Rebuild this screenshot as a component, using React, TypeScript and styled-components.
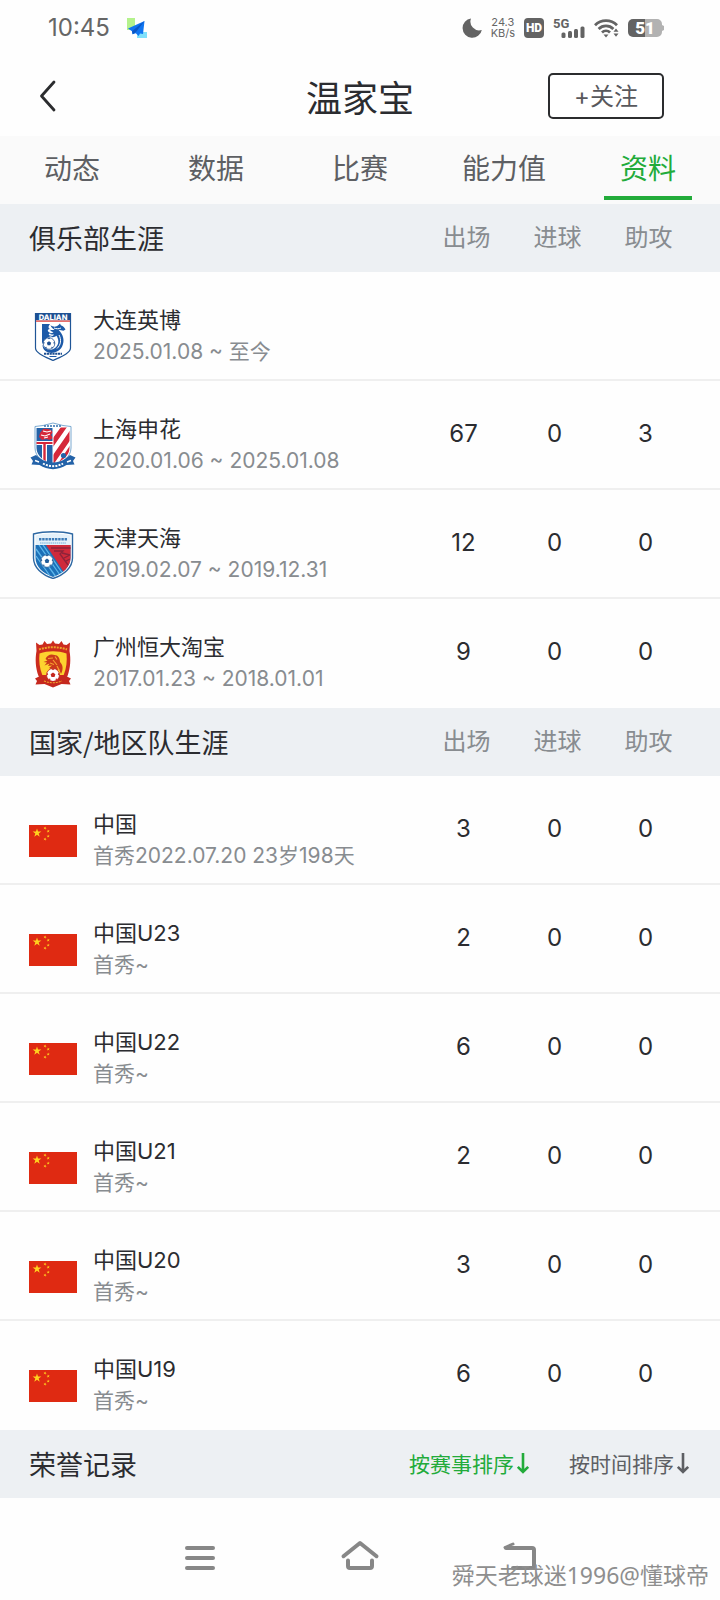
import React from 'react';
import styled, { createGlobalStyle } from 'styled-components';

const GlobalStyle = createGlobalStyle`
  *, *::before, *::after { box-sizing: border-box; }
  body {
    margin: 0;
    background: #fefefe;
    color: #2b2c30;
    font-family: "Noto Sans CJK SC", "Noto Sans", sans-serif;
  }
  button { font-family: inherit; margin: 0; cursor: pointer; }
`;

const latinFirst = 'Inter, "Noto Sans CJK SC", sans-serif';

const Page = styled.div`
  display: flex;
  flex-direction: column;
  min-height: 100vh;
`;

/* ---------- status bar ---------- */

const StatusBar = styled.div`
  display: flex;
  align-items: center;
  height: 56px;
  padding: 0 56px 0 48px;
  color: #666;
  font-family: ${latinFirst};
`;

const Clock = styled.span`
  font-size: 24px;
  line-height: 28px;
  margin-right: 17px;
`;

const StatusIcons = styled.div`
  display: flex;
  align-items: center;
  gap: 9px;
  margin-left: auto;
`;

const NetSpeed = styled.span`
  display: flex;
  flex-direction: column;
  font-size: 11px;
  line-height: 11px;
  text-align: center;
`;

const HdBadge = styled.span`
  width: 20px;
  height: 20px;
  border-radius: 4px;
  background: #636363;
  color: #fff;
  font: 900 12px/20px Roboto, sans-serif;
  text-align: center;
`;

/* ---------- header ---------- */

const Header = styled.header`
  display: grid;
  grid-template-columns: 1fr auto 1fr;
  align-items: center;
  height: 80px;
  padding: 0 56px 0 34px;
`;

const BackButton = styled.button`
  display: flex;
  padding: 0;
  border: 0;
  background: none;
  justify-self: start;
`;

const Title = styled.h1`
  margin: 0;
  padding-left: 22px;
  font-size: 36px;
  line-height: 44px;
  font-weight: 400;
`;

const FollowButton = styled.button`
  justify-self: end;
  width: 116px;
  height: 46px;
  padding: 2px 0 0;
  border: 2px solid #2b2c2e;
  border-radius: 5px;
  background: #fff;
  color: #58585c;
  font-family: ${latinFirst};
  font-size: 24px;
  line-height: 40px;
`;

/* ---------- tabs ---------- */

const Tabs = styled.nav`
  display: grid;
  grid-template-columns: repeat(5, 1fr);
  background: #fafafa;
`;

const Tab = styled.button<{ $active?: boolean }>`
  display: flex;
  flex-direction: column;
  align-items: center;
  gap: 12px;
  padding: 14px 0 4px;
  border: 0;
  background: none;
  color: ${(p) => (p.$active ? '#22ab3a' : '#5d5f63')};
  font-size: 28px;
  line-height: 34px;

  &::after {
    content: '';
    width: 88px;
    height: 4px;
    background: ${(p) => (p.$active ? '#22ab3a' : 'transparent')};
  }
`;

/* ---------- career tables ---------- */

const CareerTable = styled.table`
  width: 100%;
  table-layout: fixed;
  border-collapse: separate;
  border-spacing: 0;
`;

const HeadRow = styled.tr`
  height: 68px;
  background: #edf0f3;
`;

const SectionTitle = styled.th`
  padding: 0 0 0 29px;
  text-align: left;
  font-size: 27px;
  line-height: 36px;
  font-weight: 400;
`;

const StatHead = styled.th<{ $last?: boolean }>`
  width: ${(p) => (p.$last ? 117 : 91)}px;
  padding: 0 ${(p) => (p.$last ? 26 : 0)}px 4px 0;
  color: #888c90;
  font-size: 24px;
  line-height: 36px;
  font-weight: 400;
`;

const Row = styled.tr`
  height: 109px;
  font-family: ${latinFirst};

  > td { border-bottom: 2px solid #efefef; }
  &:last-child > td { border-bottom-color: transparent; }
`;

const TeamCell = styled.td`
  padding: 22px 0 0 29px;
`;

const Team = styled.div`
  display: flex;
  align-items: center;
  gap: 16px;
`;

const TeamText = styled.div`
  display: flex;
  flex-direction: column;
  padding-bottom: 2px;
  line-height: 31px;
  white-space: nowrap;
`;

const TeamName = styled.span`
  font-size: 22px;
`;

const TeamPeriod = styled.span`
  color: #888c90;
  font-size: 21px;
`;

const Stat = styled.td<{ $last?: boolean }>`
  padding: 0 ${(p) => (p.$last ? 32 : 6)}px 2px 0;
  text-align: center;
  font-size: 24px;
  line-height: 36px;
`;

/* ---------- honours ---------- */

const HonoursHead = styled.section`
  display: flex;
  align-items: center;
  justify-content: space-between;
  height: 68px;
  padding: 0 30px 0 29px;
  background: #edf0f3;
`;

const HonoursTitle = styled.h2`
  margin: 0;
  font-size: 27px;
  line-height: 36px;
  font-weight: 400;
`;

const SortGroup = styled.div`
  display: flex;
  gap: 39px;
  padding-bottom: 3px;
`;

const SortButton = styled.button<{ $active?: boolean }>`
  display: flex;
  align-items: center;
  gap: 2px;
  padding: 0;
  border: 0;
  background: none;
  color: ${(p) => (p.$active ? '#22ab3a' : '#5d5f63')};
  font-size: 21px;
  line-height: 32px;
`;

/* ---------- bottom navigation ---------- */

const BottomNav = styled.nav`
  position: relative;
  display: grid;
  grid-template-columns: repeat(3, 160px);
  justify-content: center;
  padding: 39px 0 23px;
`;

const NavButton = styled.button`
  display: flex;
  justify-content: center;
  padding: 0;
  border: 0;
  background: none;
`;

const Watermark = styled.span`
  position: absolute;
  right: 11px;
  bottom: 8px;
  color: #8e8e8e;
  font-family: "Noto Sans", "Noto Sans CJK SC", sans-serif;
  font-size: 23px;
  line-height: 34px;
`;

/* ---------- drawings ---------- */

const PlaneIcon = () => (
  <svg width="20" height="20" viewBox="0 0 20 20" aria-hidden="true">
    <rect width="8" height="12" fill="#b4f28c" />
    <rect x="10" y="14" width="10" height="6" fill="#7fe0fb" />
    <path d="M17.500 3 1 10.500l4 2.800.6 3 3.200-1 2.800 2.700 1.400-2.600 3 .6z" fill="#0f74f0" />
    <path d="M17.500 3 5 13.300l.6 3L9 14z" fill="#0a55c4" />
  </svg>
);

const MoonIcon = () => (
  <svg width="20" height="20" viewBox="0 0 20 20" aria-hidden="true">
    <path d="M9 .5A9.700 9.700 0 1 0 19.800 12 8.800 8.800 0 0 1 9 .5z" fill="#636363" />
  </svg>
);

const SignalIcon = () => (
  <svg width="32" height="22" viewBox="0 0 32 22" aria-hidden="true">
    <text x="0" y="11" fontSize="13" fontWeight="700" fontFamily="Roboto, sans-serif" fill="#636363">5G</text>
    <g fill="#636363">
      <rect x="8.500" y="15.500" width="4" height="5.500" rx="1.500" />
      <rect x="15" y="14" width="4" height="7" rx="1.500" />
      <rect x="21" y="12" width="4" height="9" rx="1.500" />
      <rect x="27.500" y="9.500" width="4" height="11.500" rx="1.500" />
    </g>
  </svg>
);

const WifiIcon = () => (
  <svg width="25" height="20" viewBox="0 0 25 20" aria-hidden="true">
    <g fill="none" stroke="#636363" strokeWidth="2.800">
      <path d="M1 7.200a15.500 15.500 0 0 1 22 0" />
      <path d="M4.600 11a10.500 10.500 0 0 1 14.800 0" />
      <path d="M8 14.500a5.800 5.800 0 0 1 8 0" />
    </g>
    <path d="M9.500 16.500h5L12 19.500z" fill="#636363" />
    <path d="M19.500 13.700 22 10.500l2.500 3.200zM19.500 15.500h5L22 18.700z" fill="#636363" />
  </svg>
);

const BatteryIcon = () => (
  <svg width="36" height="18" viewBox="0 0 36 18" role="img" aria-label="51%">
    <path d="M5 0h12v18H5a5 5 0 0 1-5-5V5a5 5 0 0 1 5-5z" fill="#636363" />
    <path d="M17 0h12a5 5 0 0 1 5 5v1l2 1v4l-2 1v1a5 5 0 0 1-5 5H17z" fill="#b2b2b2" />
    <text x="17" y="15" textAnchor="middle" fontSize="17" fontWeight="900" fontFamily="Roboto, sans-serif" fill="#fff">51</text>
  </svg>
);

const BackIcon = () => (
  <svg width="28" height="34" viewBox="0 0 28 34" aria-hidden="true">
    <path d="M20 3 7.500 17 20 31" fill="none" stroke="#2b2c2e" strokeWidth="2.800" strokeLinecap="round" strokeLinejoin="round" />
  </svg>
);

const DownArrow = () => (
  <svg width="14" height="22" viewBox="0 0 14 22" aria-hidden="true">
    <path d="M7 1v19M1.800 14.800 7 20l5.200-5.200" fill="none" stroke="currentColor" strokeWidth="2.600" />
  </svg>
);

const Ball = ({ x, y, r, fill }: { x: number; y: number; r: number; fill: string }) => (
  <g transform={`translate(${x} ${y}) scale(${r / 6})`}>
    <circle r="6" fill="#fff" stroke={fill} strokeWidth=".8" />
    <path
      d="M0-2.300 2.200-.7 1.400 1.900h-2.800L-2.200-.7zM-1.600-5.800h3.200L0-4.300zM5.600-2.200 5.800.8 4.400-.6zM-5.600-2.200-5.800.8-4.400-.6zM2.200 5.300 4.500 3.800 2.700 3.300zM-2.200 5.300-4.500 3.800l1.800-.5z"
      fill={fill}
    />
  </g>
);

const DalianCrest = () => (
  <svg width="48" height="48" viewBox="0 0 48 48" aria-hidden="true">
    <path d="M6.500.5h35v34.500c0 5-9 8.500-17.500 12.500C15.500 43.500 6.500 40 6.500 35z" fill="#fff" stroke="#1f5596" strokeWidth="1.200" />
    <path d="M6.500.5h35v6.800h-35z" fill="#1d4f92" />
    <text x="24" y="6.500" textAnchor="middle" fontSize="7.500" fontWeight="800" fontFamily="Inter, sans-serif" fill="#fff" textRendering="geometricPrecision">DALIAN</text>
    <path d="M7 7.500h34v1.300H7z" fill="#e0413c" />
    <path d="M13 11h8c-2 2.500-2 4 0 5-3 0-3 3 .5 3.800-3 1-2 3.200 2 3.200-4.500.5-8 3-10.500 8z" fill="#1d5aa8" />
    <path d="M21 12c4 2.500 6 2 8.500 0l1.500-1.500.8 1.700c2.500.8 3.800 2.300 4.700 4.300l-2 1.300-5-1c5 5 6.500 11 3.500 17-2.500 4.500-7.500 6.500-12 6-5-.5-7.500-4-7.500-8 2 4 6 5.800 9.500 4.800 6.500-2 8-9 4.500-13.800-1.500 1.500-4 1.700-6 1 2-.5 3-1.300 3.500-2.300-2 .2-4-.3-5-1.500 2 .4 3.500 0 4.500-.8-1.800-.6-3-1.300-3.500-2.500 2 .6 3.500.5 4.500 0-2-1-3.500-2.700-4-4.700z" fill="#1d5aa8" />
    <path d="M30 22c2.500 4.500 2 10-2 13.500M25 15c2 1 5 1 7 0" fill="none" stroke="#fff" strokeWidth="1" />
    <Ball x={20} y={30.500} r={5.800} fill="#1d4f92" />
    <path d="M15 40.800h18" stroke="#1d4f92" strokeWidth="2" strokeDasharray="2.200 .6" />
    <path d="M20.500 43.500h7" stroke="#1d5aa8" strokeWidth="1" />
  </svg>
);

const ShenhuaCrest = () => (
  <svg width="48" height="48" viewBox="0 0 48 48" aria-hidden="true">
    <defs>
      <clipPath id="shenhua-shield">
        <path d="M7.500 5.500h33V26c0 8-8 13.500-16.500 16.500C15.500 39.500 7.500 34 7.500 26z" />
      </clipPath>
    </defs>
    <path d="M6 4.500 14 3.500 24 1l10 2.500 8 1V26c0 9-9 15-18 18C15 41 6 35 6 26z" fill="#fff" stroke="#6da0cc" strokeWidth=".9" />
    <path d="M15 4h18" stroke="#3272b0" strokeWidth="1.600" strokeDasharray="2 1" />
    <g clipPath="url(#shenhua-shield)">
      <path d="M7 6h17v37H7z" fill="#2362a8" />
      <path d="M24 6h17v37H24z" fill="#fff" />
      <path d="M24 16 32 5h6L24 25zM24 33 42 7v10L24 43zM28 43 42 22v9L33 45z" fill="#d5283a" />
      <path d="M7 19h17v4H7zM13 19h5v24h-5z" fill="#fff" />
      <path d="M7 20h17v2H7zM14.300 20h2.400v23h-2.400z" fill="#d5283a" />
      <path d="M14 7c4-1 8 0 10 3l-2 3 2 3-3 2-4-1-4 1-3-3 1-4z" fill="#d5283a" />
      <path d="M14 9l4 1 4-1M12 13l4 1 5-2M15 16l4-1" stroke="#fff" strokeWidth="1.100" fill="none" />
      <path d="M24 6v37" stroke="#fff" strokeWidth="1" />
    </g>
    <path d="M1.500 35.500 7 33l5 4c7 4.500 17 4.500 24 0l5-4 5.500 2.500-2.500 3.500 1.500 3.500-8 .5c-8 5.500-19 5.500-27 0l-8-.5L4 39z" fill="#2362a8" />
    <path d="M14 41.500c6 3.500 14 3.500 20 0" fill="none" stroke="#fff" strokeWidth="2" strokeDasharray="2 1.200" />
    <path d="M6 38.500l4 1.500M42 38.500 38 40" stroke="#fff" strokeWidth="1.400" />
    <circle cx="34.500" cy="33.500" r="2.600" fill="#2362a8" />
  </svg>
);

const TianhaiCrest = () => (
  <svg width="48" height="48" viewBox="0 0 48 48" aria-hidden="true">
    <defs>
      <clipPath id="tianhai-shield">
        <path d="M6.500 14h35v13c0 8.500-7.500 15.500-17.500 19C14 42.500 6.500 35.500 6.500 27z" />
      </clipPath>
    </defs>
    <path d="M4.500 3C10 1.500 17 .7 24 .7S38 1.500 43.500 3v24c0 9.500-8.500 17-19.500 20.500C13 44 4.500 36.500 4.500 27z" fill="#fff" stroke="#2d68a3" strokeWidth="1.400" />
    <path d="M6.500 4.500C12 3 18 2.500 24 2.500s12 .5 17.500 2V14h-35z" fill="#e4f1fa" />
    <path d="M10 8.300h28" stroke="#3d7cb8" strokeWidth="2.600" strokeDasharray="2.400 .8" />
    <path d="M11 12h26" stroke="#74add8" strokeWidth="1" strokeDasharray="1.500 .6" />
    <g clipPath="url(#tianhai-shield)">
      <path d="M6 14h36v33H6z" fill="#1c70b8" />
      <path d="M17 14h25v26l-6 3z" fill="#cf2a3b" />
      <path d="M7 18l20 28M7 25l14 20M10 14l21 30M14 14l20 29" stroke="#5db6ea" strokeWidth="1.300" />
      <path d="M22 17h20M25 20h9l-3 3 8 11M33 22l8 2M35 27l6-3M37 30l4-2" fill="none" stroke="#8d233a" strokeWidth="1.300" />
    </g>
    <Ball x={18} y={30} r={6.300} fill="#235f9b" />
  </svg>
);

const GuangzhouCrest = () => (
  <svg width="48" height="48" viewBox="0 0 48 48" aria-hidden="true">
    <path d="M7 2.500 10.500 5l3-.5L15.500 1 18 4l4-.5L24 .5 26 3.500l4 .5L32.500 1l2 3.500 3 .5L41 2.500l-.5 8.500c1.500 8 1 17-2 25-3 4.500-9 7-14.500 10C18.500 43 12.500 40.500 9.500 36c-3-8-3.500-17-2-25z" fill="#cb2b1e" />
    <path d="M10.500 13.500c9-3 18-3 27 0 .8 8-.2 15-2.800 21.500H13.300C10.700 28.500 9.700 21.500 10.500 13.500z" fill="#fdd22f" />
    <path d="M10 9.500c9-3 19-3 28 0" fill="none" stroke="#f0a42a" strokeWidth="2" strokeDasharray="2 1" />
    <path d="M16.500 19c1.500-4 5.500-5.500 9-4 3.500 0 5.500 3.500 5.500 7 3 3 3.500 7 1 12l-2-5-3 2-7-3 3-2.500-4 .5 1.500-2.500-5 2 2.500-3-3.500-.5 4-1.500z" fill="#cb3a1a" />
    <path d="M19 18.500l5-.5M24 20l4 5M21 23l4 1.500M28 26l2 4M26 16.500l2 3" stroke="#f7a032" strokeWidth="1.200" />
    <path d="M6 38.500 12 35.500c7 3.500 17 3.500 24 0l6 3-2 2.500 1.500 3.500-9-.5L24 47.500 15.500 44l-9 .5L8 41z" fill="#c5281e" />
    <Ball x={24} y={35} r={6.500} fill="#c5281e" />
    <path d="M14 40.500c7 3 13 3 20 0" fill="none" stroke="#c5281e" strokeWidth="3.500" />
    <path d="M15 41c6 2.300 12 2.300 18 0" fill="none" stroke="#f0a42a" strokeWidth="1.100" strokeDasharray="2 1" />
  </svg>
);

const STAR = 'M0-1 .225-.309H.951L.363.118.588.809 0 .382-.588.809-.363.118-.951-.309h.726z';

const ChinaFlag = () => (
  <svg width="48" height="48" viewBox="0 0 48 48" aria-hidden="true">
    <path d="M0 8h48v32H0z" fill="#df2a12" />
    <g fill="#ffd21f">
      <path d={STAR} transform="translate(8 16) scale(4.600)" />
      <path d={STAR} transform="translate(16 11.200) rotate(20) scale(1.700)" />
      <path d={STAR} transform="translate(19.200 14.200) rotate(-10) scale(1.700)" />
      <path d={STAR} transform="translate(19.200 19.200) scale(1.700)" />
      <path d={STAR} transform="translate(16 22.200) rotate(20) scale(1.700)" />
    </g>
  </svg>
);

const MenuIcon = () => (
  <svg width="40" height="40" viewBox="0 0 40 40" aria-hidden="true">
    <path d="M7 11h26M7 21h26M7 31h26" stroke="#878787" strokeWidth="4" strokeLinecap="round" />
  </svg>
);

const HomeIcon = () => (
  <svg width="40" height="40" viewBox="0 0 40 40" fill="none" stroke="#878787" strokeWidth="4" strokeLinecap="round" strokeLinejoin="round" aria-hidden="true">
    <path d="M3.500 19.200 20 6l16.500 13.200" />
    <path d="M8 23.500V29q0 2 2 2h20q2 0 2-2v-5.500" />
  </svg>
);

const ReturnIcon = () => (
  <svg width="40" height="40" viewBox="0 0 40 40" aria-hidden="true">
    <path d="M6 11h26q2 0 2 2v16q0 2-2 2H13" fill="none" stroke="#878787" strokeWidth="4" strokeLinecap="round" />
    <path d="M5 10.500 13 7" fill="none" stroke="#878787" strokeWidth="3" strokeLinecap="round" />
  </svg>
);

/* ---------- data ---------- */

type Entry = {
  name: string;
  period: string;
  stats: string[];
  Logo: React.ComponentType;
};

const CLUBS: Entry[] = [
  { name: '大连英博', period: '2025.01.08 ~ 至今', stats: ['', '', ''], Logo: DalianCrest },
  { name: '上海申花', period: '2020.01.06 ~ 2025.01.08', stats: ['67', '0', '3'], Logo: ShenhuaCrest },
  { name: '天津天海', period: '2019.02.07 ~ 2019.12.31', stats: ['12', '0', '0'], Logo: TianhaiCrest },
  { name: '广州恒大淘宝', period: '2017.01.23 ~ 2018.01.01', stats: ['9', '0', '0'], Logo: GuangzhouCrest },
];

const NATIONAL: Entry[] = [
  { name: '中国', period: '首秀2022.07.20 23岁198天', stats: ['3', '0', '0'], Logo: ChinaFlag },
  { name: '中国U23', period: '首秀~', stats: ['2', '0', '0'], Logo: ChinaFlag },
  { name: '中国U22', period: '首秀~', stats: ['6', '0', '0'], Logo: ChinaFlag },
  { name: '中国U21', period: '首秀~', stats: ['2', '0', '0'], Logo: ChinaFlag },
  { name: '中国U20', period: '首秀~', stats: ['3', '0', '0'], Logo: ChinaFlag },
  { name: '中国U19', period: '首秀~', stats: ['6', '0', '0'], Logo: ChinaFlag },
];

const TABS = ['动态', '数据', '比赛', '能力值', '资料'];
const COLUMNS = ['出场', '进球', '助攻'];

const Career = ({ title, entries }: { title: string; entries: Entry[] }) => (
  <CareerTable>
    <thead>
      <HeadRow>
        <SectionTitle scope="col">{title}</SectionTitle>
        {COLUMNS.map((c, i) => (
          <StatHead key={c} scope="col" $last={i === 2}>{c}</StatHead>
        ))}
      </HeadRow>
    </thead>
    <tbody>
      {entries.map(({ name, period, stats, Logo }) => (
        <Row key={name}>
          <TeamCell>
            <Team>
              <Logo />
              <TeamText>
                <TeamName>{name}</TeamName>
                <TeamPeriod>{period}</TeamPeriod>
              </TeamText>
            </Team>
          </TeamCell>
          {stats.map((s, i) => (
            <Stat key={i} $last={i === 2}>{s}</Stat>
          ))}
        </Row>
      ))}
    </tbody>
  </CareerTable>
);

export default function App() {
  return (
    <Page>
      <GlobalStyle />
      <StatusBar>
        <Clock>10:45</Clock>
        <PlaneIcon />
        <StatusIcons>
          <MoonIcon />
          <NetSpeed>
            <span>24.3</span>
            <span>KB/s</span>
          </NetSpeed>
          <HdBadge>HD</HdBadge>
          <SignalIcon />
          <WifiIcon />
          <BatteryIcon />
        </StatusIcons>
      </StatusBar>

      <Header>
        <BackButton aria-label="返回"><BackIcon /></BackButton>
        <Title>温家宝</Title>
        <FollowButton>+关注</FollowButton>
      </Header>

      <Tabs>
        {TABS.map((t) => (
          <Tab key={t} $active={t === '资料'}>{t}</Tab>
        ))}
      </Tabs>

      <main>
        <Career title="俱乐部生涯" entries={CLUBS} />
        <Career title="国家/地区队生涯" entries={NATIONAL} />
        <HonoursHead>
          <HonoursTitle>荣誉记录</HonoursTitle>
          <SortGroup>
            <SortButton $active>按赛事排序<DownArrow /></SortButton>
            <SortButton>按时间排序<DownArrow /></SortButton>
          </SortGroup>
        </HonoursHead>
      </main>

      <BottomNav>
        <NavButton aria-label="菜单"><MenuIcon /></NavButton>
        <NavButton aria-label="主页"><HomeIcon /></NavButton>
        <NavButton aria-label="后退"><ReturnIcon /></NavButton>
        <Watermark>舜天老球迷1996@懂球帝</Watermark>
      </BottomNav>
    </Page>
  );
}
